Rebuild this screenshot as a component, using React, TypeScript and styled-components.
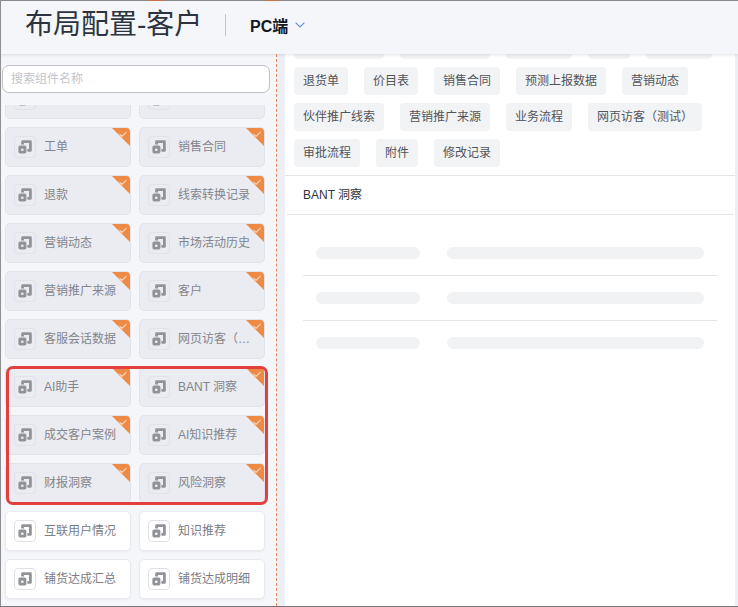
import React from 'react';
import styled, { createGlobalStyle } from 'styled-components';

const GlobalStyle = createGlobalStyle`
  html, body {
    margin: 0;
    padding: 0;
    overflow: hidden;
    background: #f5f6fa;
    font-family: "Liberation Sans", "Noto Sans CJK SC", sans-serif;
  }
  * { box-sizing: border-box; }
`;

const Page = styled.div`
  width: 738px;
  height: 607px;
  display: flex;
  flex-direction: column;
  background: #eeeff5;
  border-left: 1px solid #8e8e90;
  border-bottom: 1px solid #77787a;
  overflow: hidden;
`;

// borda superior do print, com os pedacinhos laranja dos cards
const TopEdge = styled.div`
  flex: none;
  height: 1px;
  background: linear-gradient(
    to right,
    #8e8e90 146px,
    #c9764a 146px,
    #c9764a 162px,
    #8e8e90 162px,
    #8e8e90 264px,
    #c9764a 264px,
    #c9764a 279px,
    #8e8e90 279px
  );
`;

const Header = styled.header`
  position: relative;
  z-index: 2;
  flex: none;
  height: 53px;
  display: flex;
  align-items: center;
  padding: 0 0 5px 24px;
  background: #f5f6fa;
  box-shadow: 0 1px 3px rgba(60, 65, 80, 0.14);
`;

const Title = styled.h1`
  margin: 0;
  width: 200px;
  font-size: 28px;
  font-weight: 400;
  line-height: 36px;
  color: #2d3440;
  white-space: nowrap;
`;

const HeaderDivider = styled.span`
  width: 1px;
  height: 22px;
  background: #c4c7cc;
`;

const Platform = styled.div`
  display: flex;
  align-items: center;
  gap: 7px;
  margin-left: 24px;
  font-size: 16px;
  font-weight: 700;
  color: #15181e;
`;

const Body = styled.div`
  flex: 1;
  min-height: 0;
  display: flex;
  gap: 8px;
`;

const LeftPanel = styled.aside`
  flex: none;
  width: 276px;
  display: flex;
  flex-direction: column;
  background: #f5f6fa;
  border-right: 1px dashed #e08a62;
`;

const SearchBox = styled.input`
  flex: none;
  width: 268px;
  height: 28px;
  margin: 11px 0 12px 1px;
  padding: 0 8px;
  border: 1px solid #bec0c6;
  border-radius: 7px;
  background: #fff;
  font: 12px "Liberation Sans", "Noto Sans CJK SC", sans-serif;
  outline: none;

  &::placeholder {
    color: #c3c5ca;
  }
`;

const ListViewport = styled.div`
  flex: 1;
  min-height: 0;
  overflow: hidden;
`;

const CardGrid = styled.div`
  position: relative;
  display: grid;
  grid-template-columns: 126px 126px;
  grid-auto-rows: 40px;
  gap: 8px;
  margin-top: -26px;
  padding-left: 4px;
`;

const Card = styled.div<{ $added?: boolean }>`
  position: relative;
  display: flex;
  align-items: center;
  gap: 8px;
  padding-left: 8px;
  border-radius: 5px;
  border: 1px solid ${(p) => (p.$added ? '#e2e3e9' : '#e9eaef')};
  background: ${(p) => (p.$added ? '#ebecf1' : '#fff')};
  box-shadow: ${(p) => (p.$added ? 'none' : '0 1px 2px rgba(60, 65, 80, 0.06)')};
  overflow: hidden;
`;

const IconBox = styled.span<{ $added?: boolean }>`
  flex: none;
  width: 22px;
  height: 22px;
  display: flex;
  align-items: center;
  justify-content: center;
  border-radius: 4px;
  border: 1px solid ${(p) => (p.$added ? '#e1e2e8' : '#dfe0e5')};
  background: ${(p) => (p.$added ? '#ebecf1' : '#fff')};
`;

const CardLabel = styled.span<{ $added?: boolean }>`
  max-width: 74px;
  font-size: 12px;
  line-height: 18px;
  color: ${(p) => (p.$added ? '#83858c' : '#7b7d84')};
  white-space: nowrap;
  overflow: hidden;
  text-overflow: ellipsis;
`;

const CornerBadge = styled.svg`
  position: absolute;
  top: 0;
  right: 0;
`;

// moldura vermelha por cima dos cards destacados
const HighlightFrame = styled.div`
  position: absolute;
  left: 5px;
  top: 287px;
  width: 262px;
  height: 139px;
  border: 3px solid #e1403f;
  border-radius: 7px;
  pointer-events: none;
`;

const RightPanel = styled.main`
  flex: none;
  width: 450px;
  background: #fff;
  overflow: hidden;
`;

const TagList = styled.div`
  display: flex;
  flex-wrap: wrap;
  gap: 8px 16px;
  margin-top: -23px;
  padding: 0 9px 8px;
  border-bottom: 1px solid #e3e4e8;
`;

const Tag = styled.span`
  height: 28px;
  padding: 0 9px;
  border-radius: 4px;
  background: #f2f3f5;
  font-size: 12px;
  line-height: 28px;
  color: #51545b;
  white-space: nowrap;
`;

const SectionTitle = styled.div`
  height: 39px;
  margin: 0 2px;
  padding-left: 16px;
  border-bottom: 1px solid #e3e4e8;
  font-size: 12px;
  line-height: 38px;
  color: #30333a;
`;

const SkeletonList = styled.div`
  margin-top: 16px;
  padding: 0 18px;
`;

const SkeletonRow = styled.div`
  display: flex;
  gap: 27px;
  padding: 16px 13px;
  border-bottom: 1px solid #e3e4e8;

  &:last-child {
    border-bottom: none;
  }
`;

const SkeletonBar = styled.span<{ $width: number }>`
  width: ${(p) => p.$width}px;
  height: 12px;
  border-radius: 6px;
  background: #f1f2f4;
`;

const ComponentIcon = ({ hole }: { hole: string }) => (
  <svg width="14" height="14" viewBox="0 0 14 14" fill="none">
    <path d="M4.6 4.4V1.6h7.8v8.8H9.4" stroke="#929399" strokeWidth="2.8" strokeLinejoin="round" />
    <rect x="0.4" y="5.4" width="8" height="8" rx="1.6" fill="#929399" />
    <circle cx="4.3" cy="9.7" r="1.3" fill={hole} />
  </svg>
);

const Corner = () => (
  <CornerBadge width="18" height="18" viewBox="0 0 18 18">
    <polygon points="0,0 18,0 18,18" fill="#ee8a45" />
    <polyline points="7.5,6.2 10,8.4 14.6,4" fill="none" stroke="#fff" strokeWidth="1" />
  </CornerBadge>
);

const cards: { label: string; added: boolean }[] = [
  { label: '退货单', added: true },
  { label: '价目表', added: true },
  { label: '工单', added: true },
  { label: '销售合同', added: true },
  { label: '退款', added: true },
  { label: '线索转换记录', added: true },
  { label: '营销动态', added: true },
  { label: '市场活动历史', added: true },
  { label: '营销推广来源', added: true },
  { label: '客户', added: true },
  { label: '客服会话数据', added: true },
  { label: '网页访客（测试）', added: true },
  { label: 'AI助手', added: true },
  { label: 'BANT 洞察', added: true },
  { label: '成交客户案例', added: true },
  { label: 'AI知识推荐', added: true },
  { label: '财报洞察', added: true },
  { label: '风险洞察', added: true },
  { label: '互联用户情况', added: false },
  { label: '知识推荐', added: false },
  { label: '铺货达成汇总', added: false },
  { label: '铺货达成明细', added: false },
];

const tags = [
  '线索转换记录',
  '市场活动历史',
  '客服会话',
  '工单',
  '退款记录',
  '退货单',
  '价目表',
  '销售合同',
  '预测上报数据',
  '营销动态',
  '伙伴推广线索',
  '营销推广来源',
  '业务流程',
  '网页访客（测试）',
  '审批流程',
  '附件',
  '修改记录',
];

export default function App() {
  return (
    <>
      <GlobalStyle />
      <Page>
        <TopEdge />
        <Header>
          <Title>布局配置-客户</Title>
          <HeaderDivider />
          <Platform>
            PC端
            <svg width="10" height="6" viewBox="0 0 10 6" fill="none">
              <path d="M0.6 0.6 5 5l4.4-4.4" stroke="#5f8ae0" strokeWidth="1.1" />
            </svg>
          </Platform>
        </Header>
        <Body>
          <LeftPanel>
            <SearchBox placeholder="搜索组件名称" />
            <ListViewport>
              <CardGrid>
                {cards.map((card) => (
                  <Card key={card.label} $added={card.added}>
                    <IconBox $added={card.added}>
                      <ComponentIcon hole={card.added ? '#ebecf1' : '#fff'} />
                    </IconBox>
                    <CardLabel $added={card.added}>{card.label}</CardLabel>
                    {card.added && <Corner />}
                  </Card>
                ))}
                <HighlightFrame />
              </CardGrid>
            </ListViewport>
          </LeftPanel>
          <RightPanel>
            <TagList>
              {tags.map((tag) => (
                <Tag key={tag}>{tag}</Tag>
              ))}
            </TagList>
            <SectionTitle>BANT 洞察</SectionTitle>
            <SkeletonList>
              {[0, 1, 2].map((row) => (
                <SkeletonRow key={row}>
                  <SkeletonBar $width={104} />
                  <SkeletonBar $width={257} />
                </SkeletonRow>
              ))}
            </SkeletonList>
          </RightPanel>
        </Body>
      </Page>
    </>
  );
}
